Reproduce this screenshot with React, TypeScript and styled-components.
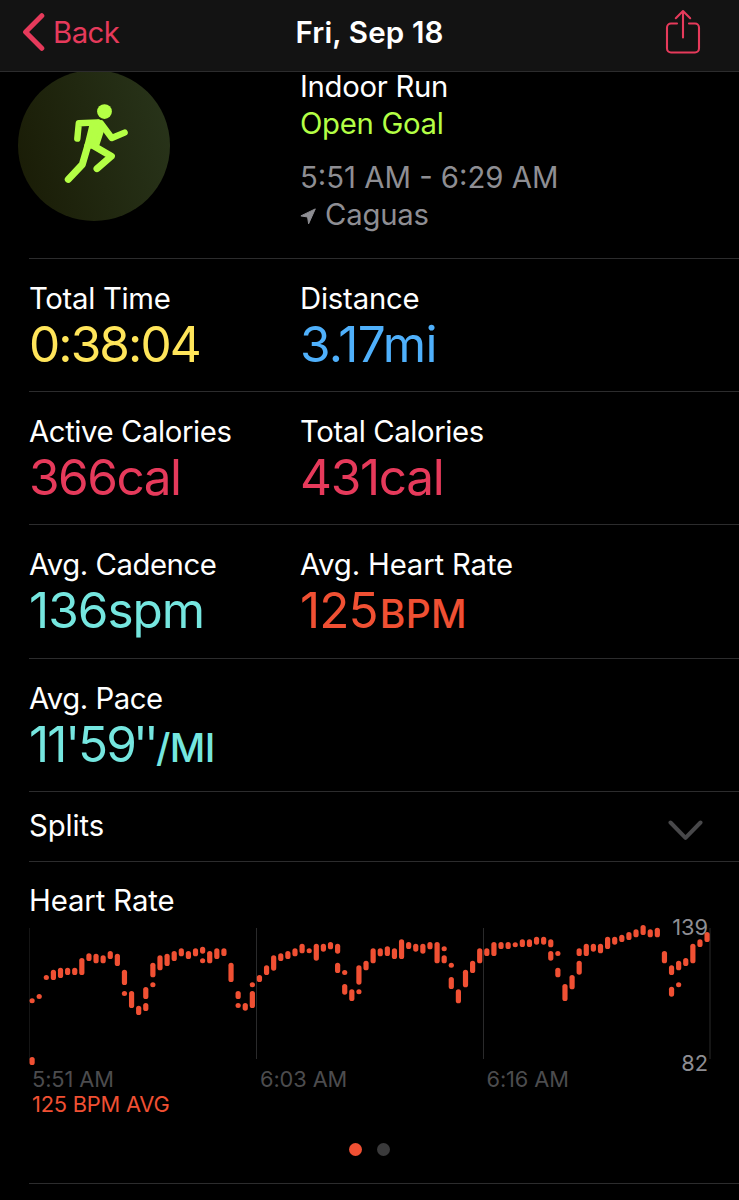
import React from "react";
import styled, { createGlobalStyle } from "styled-components";

const GlobalStyle = createGlobalStyle`
  * { box-sizing: border-box; }
  body { margin: 0; background: #000; }
`;

const Screen = styled.main`
  width: 739px;
  height: 1200px;
  overflow: hidden;
  background: #000;
  color: #fff;
  font-family: Inter, "Liberation Sans", sans-serif;
  font-size: 29.3px;
  white-space: nowrap;
`;

const NavBar = styled.header`
  position: relative;
  z-index: 1;
  display: grid;
  grid-template-columns: 1fr auto 1fr;
  align-items: center;
  height: 72px;
  padding: 0 38px 7px;
  background: #131313;
  border-bottom: 1px solid #2c2c2d;
`;

const BackButton = styled.a`
  display: flex;
  align-items: center;
  gap: 7px;
  margin-left: -16px;
  color: #e63a5b;
  letter-spacing: -0.5px;
`;

const Title = styled.h1`
  margin: 0;
  font-size: 29.5px;
  font-weight: 600;
  letter-spacing: 0.15px;
`;

const ShareButton = styled.a`
  justify-self: end;
  display: flex;
`;

const Summary = styled.section`
  display: grid;
  grid-template-columns: 282px 1fr;
  height: 186px;
  margin-left: 18px;
`;

const Badge = styled.div`
  display: flex;
  width: 152px;
  height: 151px;
  margin-top: -2px;
  padding: 32px 0 0 42px;
  border-radius: 50%;
  background: linear-gradient(75deg, #191b05, #29351b);
`;

const Details = styled.div`
  display: flex;
  flex-direction: column;
`;

const DetailLine = styled.div<{ $color: string; $gap?: number; $tracking?: number }>`
  display: flex;
  align-items: center;
  height: 37px;
  margin-top: ${(p) => p.$gap ?? 0}px;
  color: ${(p) => p.$color};
  letter-spacing: ${(p) => p.$tracking ?? 0}px;

  svg { margin: 3px 9px 0 0; }
`;

const MetricRow = styled.section`
  display: grid;
  grid-template-columns: 271px 1fr;
  height: 133.2px;
  margin-left: 29px;
  padding-top: 22px;
  border-top: 1px solid #2c2c2d;
`;

const Metric = styled.div``;

const MetricLabel = styled.div<{ $tracking?: number }>`
  height: 36px;
  line-height: 36px;
  letter-spacing: ${(p) => p.$tracking ?? 0}px;
`;

const MetricValue = styled.div<{ $color: string; $tracking?: number }>`
  height: 56px;
  line-height: 55px;
  font-size: 49.5px;
  font-weight: 400;
  color: ${(p) => p.$color};
  letter-spacing: ${(p) => p.$tracking ?? 0}px;
`;

const Seconds = styled.span`
  margin-left: -2px;
  letter-spacing: -3.8px;
`;

const CapsUnit = styled.span<{ $tracking?: number; $gap?: number }>`
  margin-left: ${(p) => p.$gap ?? 0}px;
  font-size: 39px;
  font-weight: 450;
  letter-spacing: ${(p) => p.$tracking ?? 0}px;
`;

const SplitsRow = styled.section`
  display: flex;
  justify-content: space-between;
  height: 70px;
  margin-left: 29px;
  padding: 16px 36px 0 0;
  border-top: 1px solid #2c2c2d;
  line-height: 36px;
  letter-spacing: -0.1px;

  svg { margin-top: 12px; }
`;

const HeartRateSection = styled.section`
  height: 322px;
  margin-left: 29px;
  padding-top: 21px;
  border-top: 1px solid #2c2c2d;
`;

const ChartArea = styled.div`
  display: grid;
  grid-template-columns: 682px;
  height: 147px;
  margin-top: 1px;

  > * { grid-area: 1 / 1; }
`;

const Scale = styled.div`
  display: flex;
  flex-direction: column;
  justify-content: space-between;
  align-items: flex-end;
  height: 160px;
  margin: -5px 3px 0 0;
  font-size: 21.8px;
  line-height: 24px;
  color: #8e8e93;
`;

const TimeAxis = styled.div`
  display: grid;
  grid-template-columns: 228px 226.5px 1fr;
  height: 25px;
  padding-left: 3px;
  font-size: 21.8px;
  line-height: 25px;
  letter-spacing: -0.1px;
  color: #4c4c4e;
`;

const Average = styled.div`
  padding-left: 3px;
  font-size: 21.8px;
  line-height: 25px;
  letter-spacing: -0.2px;
  color: #f05033;
`;

const Pager = styled.div`
  display: flex;
  gap: 15.5px;
  margin: 26.5px 0 0 319.5px;
`;

const PageDot = styled.span<{ $active?: boolean }>`
  width: 13px;
  height: 13px;
  border-radius: 50%;
  background: ${(p) => (p.$active ? "#f05033" : "#3a3a3b")};
`;

const EndRule = styled.hr`
  height: 1px;
  margin: 0 0 0 29px;
  border: 0;
  background: #2c2c2d;
`;

/* [sample, top, bottom] in thirds of a pixel; the shortest bars show as dots */
const samples: [number, number, number][] = [
  [0, 235, 250], [0, 411, 435], [1, 222, 237], [2, 165, 180], [3, 149, 180],
  [4, 143, 174], [5, 143, 165], [6, 143, 165], [7, 114, 165], [8, 100, 123],
  [9, 101, 130], [10, 106, 130], [11, 93, 117], [12, 101, 138], [13, 149, 195],
  [13, 213, 228], [14, 213, 264], [15, 257, 285], [16, 201, 237], [16, 249, 273],
  [17, 128, 172], [17, 187, 202], [18, 106, 151], [19, 101, 138], [20, 93, 123],
  [21, 85, 109], [22, 93, 117], [23, 85, 109], [24, 80, 101], [24, 115, 130],
  [25, 93, 130], [26, 85, 117], [27, 85, 108], [28, 128, 186], [29, 213, 237],
  [29, 249, 264], [30, 249, 272], [31, 213, 264], [31, 187, 202], [32, 165, 186],
  [33, 136, 165], [34, 106, 152], [35, 100, 123], [36, 93, 117], [37, 85, 109],
  [38, 71, 100], [39, 85, 100], [40, 71, 122], [41, 71, 95], [42, 66, 88],
  [43, 71, 101], [43, 128, 159], [44, 150, 165], [44, 192, 224], [45, 208, 243],
  [46, 136, 194], [46, 208, 223], [47, 122, 151], [48, 85, 130], [49, 85, 109],
  [50, 79, 108], [51, 85, 117], [52, 58, 117], [53, 66, 87], [54, 71, 95],
  [55, 71, 101], [56, 66, 88], [57, 66, 130], [58, 79, 94], [58, 106, 130],
  [59, 128, 143], [59, 171, 207], [60, 208, 250], [61, 149, 202], [62, 122, 159],
  [63, 85, 130], [64, 85, 108], [65, 66, 108], [66, 66, 87], [67, 66, 87],
  [68, 67, 82], [69, 58, 81], [70, 58, 81], [71, 50, 74], [72, 50, 74],
  [73, 58, 82], [73, 93, 122], [74, 93, 108], [74, 143, 172], [75, 192, 243],
  [76, 165, 208], [77, 85, 108], [77, 122, 164], [78, 71, 108], [79, 71, 95],
  [80, 71, 100], [81, 50, 87], [82, 50, 74], [83, 44, 66], [84, 36, 60],
  [85, 28, 52], [86, 15, 45], [87, 28, 52], [88, 23, 52], [89, 93, 130],
  [90, 136, 165], [90, 200, 230], [91, 122, 151], [91, 187, 202], [92, 114, 138],
  [93, 71, 130], [94, 58, 81], [95, 36, 66],
];

function HeartRateChart() {
  return (
    <svg width="682" height="150" viewBox="29 920 682 150">
      {[29, 256.5, 483.5, 710].map((x) => (
        <rect key={x} x={x - 0.5} y="928" width="1" height="131" fill="#2a2a2b" />
      ))}
      {samples.map(([i, top, bottom], n) => (
        <rect
          key={n}
          x={32.1 + i * 7.105 - 2.6}
          y={920 + top / 3}
          width="5.2"
          height={(bottom - top) / 3}
          rx="2.6"
          fill="#f05033"
        />
      ))}
    </svg>
  );
}

function RunnerIcon() {
  return (
    <svg width="72" height="86" viewBox="60 101 72 86" fill="none" stroke="#b4ff45" strokeLinecap="round" strokeLinejoin="round">
      <circle cx="104.5" cy="110.6" r="7.4" fill="#b4ff45" stroke="none" />
      <path d="M77.3 137.6 78.8 122.3 98 121.4" strokeWidth="6.4" />
      <path d="M101 122.5 111.8 137 124.6 131.6" strokeWidth="6.4" />
      <path d="M92 123.5 98.5 121 103 125 97 143.5 86.5 146Z" fill="#b4ff45" strokeWidth="5" />
      <path d="M88 144 82.3 163.5 68.3 178.4" strokeWidth="7" />
      <path d="M93 144.5 111.4 155.2 97 167.6" strokeWidth="7" />
    </svg>
  );
}

export default function App() {
  return (
    <Screen>
      <GlobalStyle />
      <NavBar>
        <BackButton>
          <svg width="24" height="38" viewBox="0 0 24 38" fill="none" stroke="#e63a5b" strokeWidth="5" strokeLinecap="round" strokeLinejoin="round">
            <path d="M19.8 2.7 3.6 19 19.8 35.3" />
          </svg>
          Back
        </BackButton>
        <Title>Fri, Sep 18</Title>
        <ShareButton>
          <svg width="36" height="46" viewBox="0 0 36 46" fill="none" stroke="#e63a5b" strokeWidth="2.1" strokeLinecap="round" strokeLinejoin="round">
            <path d="M12 14.5H6a4 4 0 0 0-4 4v21a4 4 0 0 0 4 4h24a4 4 0 0 0 4-4v-21a4 4 0 0 0-4-4h-6M18 28.5V2.2M10.8 9.2 18 2l7.2 7.2" />
          </svg>
        </ShareButton>
      </NavBar>

      <Summary>
        <Badge><RunnerIcon /></Badge>
        <Details>
          <DetailLine $color="#fff" $gap={-4} $tracking={-0.3}>Indoor Run</DetailLine>
          <DetailLine $color="#b4ff45" $tracking={-0.3}>Open Goal</DetailLine>
          <DetailLine $color="#8e8e93" $gap={17}>5:51 AM - 6:29 AM</DetailLine>
          <DetailLine $color="#8e8e93" $tracking={-0.2}>
            <svg width="16" height="17" viewBox="0 0 16 17" fill="#8e8e93" stroke="#8e8e93" strokeLinejoin="round">
              <path d="M15.3.9 8.6 15.8 7.6 9 .9 7.9Z" />
            </svg>
            Caguas
          </DetailLine>
        </Details>
      </Summary>

      <MetricRow>
        <Metric>
          <MetricLabel $tracking={-0.3}>Total Time</MetricLabel>
          <MetricValue $color="#ffe55a" $tracking={-1.9}>0:38:04</MetricValue>
        </Metric>
        <Metric>
          <MetricLabel $tracking={-0.2}>Distance</MetricLabel>
          <MetricValue $color="#4fb0fb" $tracking={-0.6}>3.17mi</MetricValue>
        </Metric>
      </MetricRow>
      <MetricRow>
        <Metric>
          <MetricLabel $tracking={-0.4}>Active Calories</MetricLabel>
          <MetricValue $color="#e63a5b" $tracking={-1.5}>366cal</MetricValue>
        </Metric>
        <Metric>
          <MetricLabel $tracking={-0.4}>Total Calories</MetricLabel>
          <MetricValue $color="#e63a5b" $tracking={-1.3}>431cal</MetricValue>
        </Metric>
      </MetricRow>
      <MetricRow>
        <Metric>
          <MetricLabel $tracking={-0.45}>Avg. Cadence</MetricLabel>
          <MetricValue $color="#75e6df" $tracking={-1}>136spm</MetricValue>
        </Metric>
        <Metric>
          <MetricLabel $tracking={-0.15}>Avg. Heart Rate</MetricLabel>
          <MetricValue $color="#f05033" $tracking={-0.9}>125<CapsUnit $gap={2} $tracking={0.3}>BPM</CapsUnit></MetricValue>
        </Metric>
      </MetricRow>
      <MetricRow>
        <Metric>
          <MetricLabel $tracking={-0.45}>Avg. Pace</MetricLabel>
          <MetricValue $color="#75e6df" $tracking={-2}>
            11'59<Seconds>''</Seconds><CapsUnit $tracking={-0.6} $gap={1}>/MI</CapsUnit>
          </MetricValue>
        </Metric>
      </MetricRow>

      <SplitsRow>
        Splits
        <svg width="35" height="21" viewBox="0 0 35 21" fill="none" stroke="#48484a" strokeWidth="4" strokeLinecap="round" strokeLinejoin="round">
          <path d="M2.5 2.5 17.5 17.8 32.5 2.5" />
        </svg>
      </SplitsRow>

      <HeartRateSection>
        <MetricLabel $tracking={-0.1}>Heart Rate</MetricLabel>
        <ChartArea>
          <HeartRateChart />
          <Scale><span>139</span><span>82</span></Scale>
        </ChartArea>
        <TimeAxis><span>5:51 AM</span><span>6:03 AM</span><span>6:16 AM</span></TimeAxis>
        <Average>125 BPM AVG</Average>
        <Pager><PageDot $active /><PageDot /></Pager>
      </HeartRateSection>
      <EndRule />
    </Screen>
  );
}
